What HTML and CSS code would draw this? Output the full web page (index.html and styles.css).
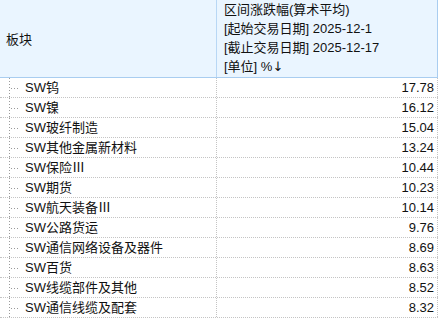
FILE: index.html
```html
<!DOCTYPE html>
<html lang="zh-CN">
<head>
<meta charset="utf-8">
<link rel="stylesheet" href="styles.css">
</head>
<body>
<div class="grid">
  <div class="head">
    <div class="hcell hname">板块</div>
    <div class="hcell hval">
      <div>区间涨跌幅(算术平均)</div>
      <div>[起始交易日期] 2025-12-1</div>
      <div>[截止交易日期] 2025-12-17</div>
      <div>[单位] %<span class="arrow">↓</span></div>
    </div>
  </div>
  <div class="row"><div class="name"><span class="tree"></span>SW钨</div><div class="val">17.78</div></div>
  <div class="row"><div class="name"><span class="tree"></span>SW镍</div><div class="val">16.12</div></div>
  <div class="row"><div class="name"><span class="tree"></span>SW玻纤制造</div><div class="val">15.04</div></div>
  <div class="row"><div class="name"><span class="tree"></span>SW其他金属新材料</div><div class="val">13.24</div></div>
  <div class="row"><div class="name"><span class="tree"></span>SW保险Ⅲ</div><div class="val">10.44</div></div>
  <div class="row"><div class="name"><span class="tree"></span>SW期货</div><div class="val">10.23</div></div>
  <div class="row"><div class="name"><span class="tree"></span>SW航天装备Ⅲ</div><div class="val">10.14</div></div>
  <div class="row"><div class="name"><span class="tree"></span>SW公路货运</div><div class="val">9.76</div></div>
  <div class="row"><div class="name"><span class="tree"></span>SW通信网络设备及器件</div><div class="val">8.69</div></div>
  <div class="row"><div class="name"><span class="tree"></span>SW百货</div><div class="val">8.63</div></div>
  <div class="row"><div class="name"><span class="tree"></span>SW线缆部件及其他</div><div class="val">8.52</div></div>
  <div class="row"><div class="name"><span class="tree"></span>SW通信线缆及配套</div><div class="val">8.32</div></div>
</div>
</body>
</html>
```
FILE: styles.css
```css
html, body {
  margin: 0;
  padding: 0;
  background: #ffffff;
}
body {
  font-family: "Liberation Sans", "Noto Sans CJK SC", sans-serif;
  font-size: 13px;
  color: #111;
  width: 440px;
  height: 320px;
  overflow: hidden;
}
.grid {
  width: 438px;
}
.head {
  display: grid;
  grid-template-columns: 217px 221px;
  height: 77px;
  background: #eaf5ff;
  border-bottom: 1px solid #a9cdf0;
}
.hcell {
  line-height: 19px;
}
.hname {
  border-right: 1px solid #b8d7f5;
  padding-left: 6px;
  display: flex;
  align-items: center;
  padding-top: 1px;
}
.hval {
  border-right: 1px solid #a9cdf0;
  padding-left: 7px;
}
.arrow {
  font-family: "DejaVu Sans", sans-serif;
  font-size: 13px;
}
.row {
  display: grid;
  grid-template-columns: 217px 221px;
  height: 20px;
  box-sizing: border-box;
  border-bottom: 1px dotted #c4c4c4;
  line-height: 19px;
}
.name {
  border-right: 1px dotted #c4c4c4;
  display: flex;
  align-items: stretch;
}
.tree {
  width: 25px;
  flex: none;
  background:
    repeating-linear-gradient(to bottom, #9a9a9a 0 1px, transparent 1px 3px) 9px 0 / 1px 100% no-repeat,
    repeating-linear-gradient(to right, #9a9a9a 0 1px, transparent 1px 3px) 11px 10px / 8px 1px no-repeat;
}
.val {
  border-right: 1px dotted #c4c4c4;
  text-align: right;
  padding-right: 3px;
}
```
